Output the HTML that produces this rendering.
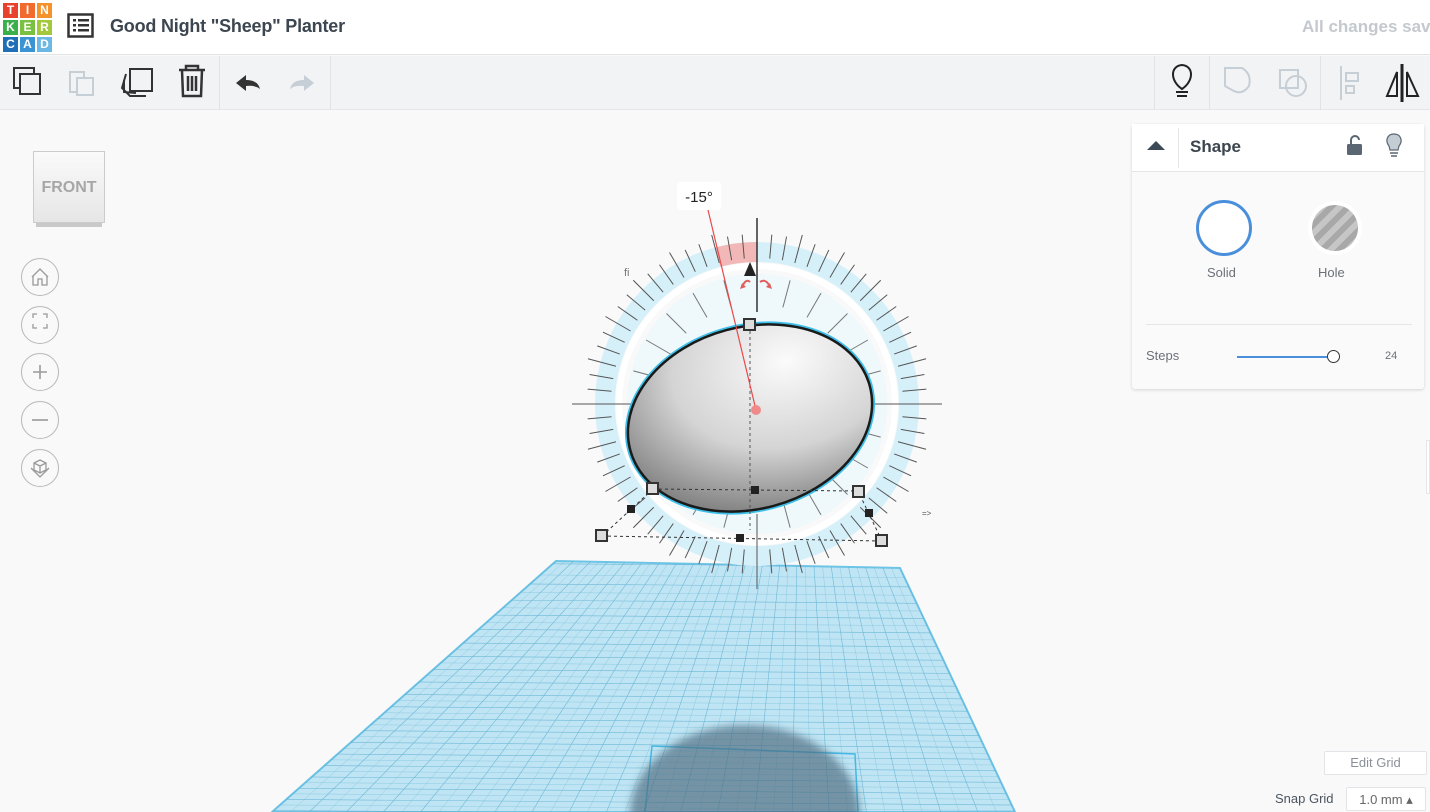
<!DOCTYPE html>
<html><head><meta charset="utf-8"><style>
*{margin:0;padding:0;box-sizing:border-box}
html,body{width:1430px;height:812px;overflow:hidden}
body{background:#f9f9f9;font-family:"Liberation Sans",sans-serif;position:relative}
.top{position:absolute;left:0;top:0;width:1430px;height:55px;background:#fff;border-bottom:1px solid #e2e4e8}
.tb{position:absolute;left:0;top:56px;width:1430px;height:54px;background:#f2f3f5;border-bottom:1px solid #e4e6ea}
.logo{position:absolute;left:3px;top:3px;width:49px;height:49px;display:grid;grid-template-columns:repeat(3,15px);gap:2px}
.logo div{color:#fff;font-weight:bold;font-size:12px;text-align:center;line-height:15px}
.title{position:absolute;left:110px;top:16px;font-size:18px;color:#3c4650;font-weight:bold;letter-spacing:-0.2px}
.saved{position:absolute;left:1302px;top:17px;font-size:17px;color:#c4c9cf;white-space:nowrap;font-weight:bold}
.sep{position:absolute;top:56px;width:1px;height:54px;background:#e0e2e6}
.panel{position:absolute;left:1132px;top:124px;width:292px;height:265px;background:#fafafa;border-radius:3px;box-shadow:0 1px 3px rgba(0,0,0,.15)}
.ph{height:48px;background:#fff;border-bottom:1px solid #e4e6e9;position:relative}
.circ{position:absolute;left:21px;width:38px;height:38px;border:1px solid #b8b8b8;border-radius:50%}
.btn{position:absolute;background:#fff;border:1px solid #e2e4e8;border-radius:2px;font-size:13px;color:#8a9098;text-align:center}
</style></head><body>
<div class="top">
<div class="logo">
<div style="background:#e8412c">T</div><div style="background:#f26a2c">I</div><div style="background:#f6922c">N</div>
<div style="background:#3bb04a">K</div><div style="background:#7ac142">E</div><div style="background:#a3c83c">R</div>
<div style="background:#1d6fb8">C</div><div style="background:#3a94d4">A</div><div style="background:#6bb8e4">D</div>
</div>
<svg style="position:absolute;left:67px;top:13px" width="27" height="25" viewBox="0 0 27 25"><rect x="1.5" y="1.5" width="24" height="22" fill="none" stroke="#333" stroke-width="2.5"/><g fill="#333"><rect x="6" y="6" width="3" height="2.5"/><rect x="11" y="6" width="11" height="2.5"/><rect x="6" y="11" width="3" height="2.5"/><rect x="11" y="11" width="11" height="2.5"/><rect x="6" y="16" width="3" height="2.5"/><rect x="11" y="16" width="11" height="2.5"/></g></svg>
<div class="title">Good Night "Sheep" Planter</div>
<div class="saved">All changes saved</div>
</div>
<div class="tb">
<svg width="1430" height="54" style="position:absolute;left:0;top:0" fill="none" stroke-width="2">
<g stroke="#333"><rect x="14" y="12" width="20" height="20"/><rect x="20" y="18" width="20" height="20" fill="#f2f3f5"/></g>
<g stroke="#c6ced6"><rect x="70" y="16" width="14" height="20"/><rect x="77" y="22" width="16" height="17" fill="#f2f3f5"/></g>
<g stroke="#333"><rect x="130" y="13" width="22" height="22"/><path d="M126 18 L122 32 L130 40 L146 40"/><path d="M124 24 L124 36 L136 37"/></g>
<g stroke="#333" stroke-width="2.5"><path d="M179 14 H205 M186 14 V10 H198 V14 M182 14 L183 40 H201 L202 14 M188 20 V35 M192 20 V35 M196 20 V35"/></g>
<path d="M236 27 L246 19 V24 Q258 24 260 33 Q255 29 246 30 V35 Z" fill="#333" stroke="none"/>
<path d="M314 27 L304 19 V24 Q292 24 290 33 Q295 29 304 30 V35 Z" fill="#c6ced6" stroke="none"/>
<g stroke="#222"><path d="M1182 33 C1170 25 1170 10 1182 9 C1194 10 1194 25 1182 33 Z"/><path d="M1176 36 H1188 M1177 40 H1187"/></g>
<g stroke="#c6ced6"><path d="M1225 12 H1242 Q1252 18 1249 30 Q1242 40 1232 34 L1225 30 Z"/><rect x="1280" y="14" width="18" height="18"/><circle cx="1296" cy="30" r="10"/><path d="M1341 10 V44 M1346 17 H1358 V25 H1346 Z M1346 30 H1354 V37 H1346 Z"/></g>
<g stroke="#222"><path d="M1402 8 V46" stroke-width="3"/><path d="M1397 16 L1387 40 H1397 Z M1407 16 L1418 40 H1407 Z"/></g>
</svg>
</div>
<div class="sep" style="left:219px"></div><div class="sep" style="left:330px"></div>
<div class="sep" style="left:1154px"></div><div class="sep" style="left:1209px"></div><div class="sep" style="left:1320px"></div>

<div style="position:absolute;left:36px;top:221px;width:66px;height:6px;background:#c9c9c9"></div>
<div style="position:absolute;left:33px;top:151px;width:72px;height:72px;background:linear-gradient(#fafafa,#e6e6e6);border:1px solid #ccc;font-weight:bold;font-size:16px;color:#a6a6a6;text-align:center;line-height:72px">FRONT</div>
<div class="circ" style="top:258px"></div><div class="circ" style="top:306px"></div><div class="circ" style="top:353px"></div><div class="circ" style="top:401px"></div><div class="circ" style="top:449px"></div>
<svg width="60" height="240" style="position:absolute;left:0;top:258px" fill="none" stroke="#999" stroke-width="1.3">
<path d="M32 19 L40 11 L48 19 M33 18 V27 H38 V21 H42 V27 H47 V18"/>
<path d="M33 60 V56 H37 M43 56 H47 V60 M47 66 V70 H43 M37 70 H33 V66"/>
<path d="M33 114 H47 M40 107 V121" stroke-width="1.6"/>
<path d="M32 162 H48" stroke-width="1.6"/>
<path d="M34 205 L40 202 L46 205 V212 L40 215 L34 212 Z M34 205 L40 208 L46 205 M40 208 V215 M31 210 L40 219 L49 210"/>
</svg>

<svg width="1430" height="812" style="position:absolute;left:0;top:0" id="sc">
<defs>
<radialGradient id="eg" cx="0.7" cy="0.25" r="0.85"><stop offset="0" stop-color="#fbfbfb"/><stop offset="0.55" stop-color="#d4d4d4"/><stop offset="1" stop-color="#7a7a7a"/></radialGradient>
<filter id="bl"><feGaussianBlur stdDeviation="4"/></filter>
<clipPath id="pc"><polygon points="556,561 900,568 1015,812 272,812"/></clipPath>
</defs>
<polygon points="556,561 900,568 1015,812 272,812" fill="#bfe4f3" stroke="#6ec4e6" stroke-width="2"/>
<g id="grid" clip-path="url(#pc)" stroke="#5aaed0" stroke-width="0.6" opacity="0.8"></g>
<path d="M652 746 L855 754 L858 812 L645 812 Z" fill="none" stroke="#45b8e4" stroke-width="1.5"/>
<ellipse cx="745" cy="815" rx="115" ry="90" fill="#4d6a7e" opacity="0.65" filter="url(#bl)" clip-path="url(#pc)"/>
<circle cx="757" cy="404" r="152" fill="none" stroke="#d6f0fa" stroke-width="20"/>
<circle cx="757" cy="404" r="138" fill="none" stroke="#fff" stroke-width="6"/>
<circle cx="757" cy="404" r="130" fill="#eff8fb"/>
<path d="M757 242 A162 162 0 0 0 715.1 247.5 L720.3 266.8 A142 142 0 0 1 757 262 Z" fill="#f2b8b8"/>
<g id="ticks" stroke="#555" stroke-width="1"></g>
<g transform="rotate(-15 750 418)">
<ellipse cx="750" cy="418" rx="127" ry="94" fill="#3fbfe8"/>
<ellipse cx="750" cy="418" rx="124" ry="91" fill="url(#eg)" stroke="#1a1a1a" stroke-width="2.5"/>
</g>
<line x1="750" y1="325" x2="750" y2="530" stroke="#555" stroke-dasharray="3,3"/>
<line x1="653" y1="489" x2="858" y2="491" stroke="#333" stroke-dasharray="3,3"/>
<line x1="602" y1="536" x2="882" y2="541" stroke="#333" stroke-dasharray="3,3"/>
<line x1="602" y1="536" x2="653" y2="489" stroke="#333" stroke-dasharray="3,3"/>
<line x1="882" y1="541" x2="858" y2="491" stroke="#333" stroke-dasharray="3,3"/>
<line x1="757" y1="218" x2="757" y2="312" stroke="#333" stroke-width="1.5"/>
<line x1="708" y1="210" x2="756" y2="410" stroke="#e84a4a" stroke-width="1.2"/>
<circle cx="756" cy="410" r="5" fill="#f08a8a"/>
<path d="M750 262 L744 276 H756 Z" fill="#222"/>
<path d="M742 287 Q746 278 750 282 M770 287 Q766 278 760 282" stroke="#e06060" stroke-width="2" fill="none"/>
<path d="M740 289 L742 283 L746 287 Z M772 289 L770 283 L766 287 Z" fill="#e06060"/>
<g fill="#ddd" stroke="#333" stroke-width="2">
<rect x="744" y="319" width="11" height="11"/><rect x="647" y="483" width="11" height="11"/><rect x="853" y="486" width="11" height="11"/><rect x="596" y="530" width="11" height="11"/><rect x="876" y="535" width="11" height="11"/></g>
<g fill="#222"><rect x="751" y="486" width="8" height="8"/><rect x="627" y="505" width="8" height="8"/><rect x="865" y="509" width="8" height="8"/><rect x="736" y="534" width="8" height="8"/></g>
<text x="922" y="516" font-size="8" fill="#555" font-family="Liberation Sans">=&gt;</text>
<text x="624" y="276" font-size="11" fill="#777" font-family="Liberation Sans">fi</text>
<rect x="677" y="182" width="44" height="28" rx="3" fill="#fff"/>
<text x="699" y="202" font-size="15" fill="#222" text-anchor="middle" font-family="Liberation Sans">-15°</text>
</svg>

<div class="panel">
<div class="ph">
<div style="position:absolute;left:46px;top:4px;width:1px;height:40px;background:#e4e6e9"></div>
<svg width="20" height="12" style="position:absolute;left:14px;top:16px"><path d="M1 10 L10 1 L19 10 Z" fill="#3c4a58"/></svg>
<div style="position:absolute;left:58px;top:13px;font-size:17px;color:#3c4650;font-weight:bold">Shape</div>
<svg width="18" height="20" style="position:absolute;left:214px;top:11px"><path d="M5 9 V5 A4 4 0 0 1 13 5" stroke="#5a6672" stroke-width="2" fill="none"/><rect x="1" y="9" width="15" height="11" rx="1.5" fill="#5a6672"/></svg>
<svg width="18" height="24" style="position:absolute;left:253px;top:9px"><path d="M9 1 C2 1 0 8 4 13 L5 17 H13 L14 13 C18 8 16 1 9 1 Z" fill="#c5cdd4" stroke="#5a6672" stroke-width="1.2"/><path d="M5 20 H13 M6 23 H12" stroke="#5a6672" stroke-width="1.5"/></svg>
</div>
<div style="position:absolute;left:64px;top:76px;width:56px;height:56px;border:3px solid #4a8fdc;border-radius:50%;background:#fff"></div>
<div style="position:absolute;left:176px;top:77px;width:54px;height:54px;border-radius:50%;background:#fff;padding:4px"><div style="width:46px;height:46px;border-radius:50%;background:repeating-linear-gradient(135deg,#a8a8a8 0 6px,#c6c6c6 6px 12px)"></div></div>
<div style="position:absolute;left:75px;top:141px;font-size:13px;color:#6a7178">Solid</div>
<div style="position:absolute;left:186px;top:141px;font-size:13px;color:#6a7178">Hole</div>
<div style="position:absolute;left:14px;top:200px;width:266px;height:1px;background:#e4e6e9"></div>
<div style="position:absolute;left:14px;top:224px;font-size:13px;color:#6a7178">Steps</div>
<div style="position:absolute;left:105px;top:232px;width:90px;height:2px;background:#4a8fdc"></div>
<div style="position:absolute;left:195px;top:226px;width:13px;height:13px;border:1.5px solid #333;border-radius:50%;background:#fff"></div>
<div style="position:absolute;left:253px;top:226px;font-size:11px;color:#6a7178">24</div>
</div>
<div style="position:absolute;left:1426px;top:440px;width:4px;height:54px;background:#fff;border:1px solid #e4e6e9"></div>
<div class="btn" style="left:1324px;top:751px;width:103px;height:24px;line-height:22px">Edit Grid</div>
<div style="position:absolute;left:1275px;top:791px;font-size:13px;color:#4a5560">Snap Grid</div>
<div class="btn" style="left:1346px;top:787px;width:80px;height:24px;line-height:24px;color:#666">1.0 mm &#9652;</div>

<script>
var ns="http://www.w3.org/2000/svg";
var t=document.getElementById("ticks"),cx=757,cy=404;
for(var a=0;a<360;a+=5){var r=a*Math.PI/180,s=Math.sin(r),c=Math.cos(r);var r1=146,r2=170,w=1;
if(a%90==0){r1=110;r2=185;}else if(a%15==0){r2=175;
var l=document.createElementNS(ns,"line");l.setAttribute("x1",cx+s*100);l.setAttribute("y1",cy-c*100);l.setAttribute("x2",cx+s*128);l.setAttribute("y2",cy-c*128);l.setAttribute("stroke","#777");t.appendChild(l);}
if(a==0)continue;
var l=document.createElementNS(ns,"line");l.setAttribute("x1",cx+s*r1);l.setAttribute("y1",cy-c*r1);l.setAttribute("x2",cx+s*r2);l.setAttribute("y2",cy-c*r2);l.setAttribute("stroke-width",w);t.appendChild(l);}
var g=document.getElementById("grid");
for(var i=0;i<=40;i++){var f=i/40;var x1=556+(900-556)*f,x2=272+(1015-272)*f;var l=document.createElementNS(ns,"line");l.setAttribute("x1",x1);l.setAttribute("y1",561+7*f);l.setAttribute("x2",x2);l.setAttribute("y2",812);if(i%2)l.setAttribute("stroke-width","0.3");g.appendChild(l);}
for(var j=0;j<=40;j++){var y=561+Math.pow(j/40,0.85)*260;var l=document.createElementNS(ns,"line");l.setAttribute("x1",200);l.setAttribute("y1",y);l.setAttribute("x2",1100);l.setAttribute("y2",y+7);if(j%2)l.setAttribute("stroke-width","0.3");g.appendChild(l);}
</script>
</body></html>
